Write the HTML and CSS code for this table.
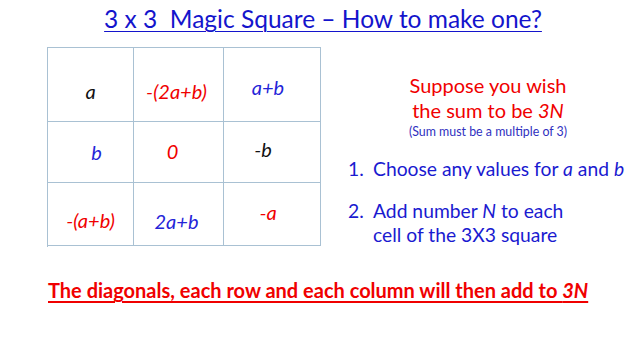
FILE: index.html
```html
<!DOCTYPE html>
<html>
<head>
<meta charset="utf-8">
<link rel="stylesheet" href="styles.css">
</head>
<body>
<div class="slide">
  <h1 class="title">3 x 3&nbsp; Magic Square – How to make one?</h1>
  <div class="middle">
    <div class="square">
      <div class="cell c1"><span class="k">a</span></div>
      <div class="cell c2"><span class="r">-(2a+b)</span></div>
      <div class="cell c3"><span class="bl">a+b</span></div>
      <div class="cell c4"><span class="bl">b</span></div>
      <div class="cell c5"><span class="r">0</span></div>
      <div class="cell c6"><span class="k">-b</span></div>
      <div class="cell c7"><span class="r">-(a+b)</span></div>
      <div class="cell c8"><span class="bl">2a+b</span></div>
      <div class="cell c9"><span class="r">-a</span></div>
    </div>
    <div class="notes">
      <div class="suppose">
        <p class="big">Suppose you wish</p>
        <p class="big">the sum to be <i>3N</i></p>
        <p class="small">(Sum must be a multiple of 3)</p>
      </div>
      <ol class="steps">
        <li class="step1"><span class="num">1.</span><span>Choose any values for <i>a</i> and <i>b</i></span></li>
        <li class="step2"><span class="num">2.</span><span>Add number <i>N</i> to each<br>cell of the 3X3 square</span></li>
      </ol>
    </div>
  </div>
  <p class="conclusion">The diagonals, each row and each column will then add to <i>3N</i></p>
</div>
</body>
</html>
```
FILE: styles.css
```css
* { box-sizing: border-box; }
html, body { margin: 0; padding: 0; background: #fff; }
body { width: 640px; height: 360px; overflow: hidden; font-family: Lato, "Open Sans", sans-serif; }
.slide { width: 640px; height: 360px; display: flex; flex-direction: column; }
p { margin: 0; }
.title {
  margin: 5px 0 0 0;
  font-weight: 400;
  font-size: 24.5px;
  line-height: 28px;
  color: #1414cc;
  text-align: center;
  padding-left: 6px;
  text-decoration: underline;
  text-decoration-thickness: 1px;
  text-underline-offset: 3px;
}
.middle { display: flex; margin-top: 14px; }
.square {
  margin-left: 47px;
  display: grid;
  grid-template-columns: 86px 90px 97px;
  grid-template-rows: 74px 61px 63px;
  border-top: 1px solid #a9c1d3;
  border-left: 1px solid #a9c1d3;
}
.cell {
  border-right: 1px solid #a9c1d3;
  border-bottom: 1px solid #a9c1d3;
  display: flex;
  align-items: center;
  justify-content: center;
  font-style: italic;
  font-size: 20px;
}
.k { color: #111; }
.r { color: #f00000; }
.bl { color: #2424d8; }
.c1 { padding-top: 12px; }
.c2 { padding: 12px 4px 0 0; }
.c3 { padding: 4px 8px 0 0; }
.c4 { padding-left: 12px; }
.c5 { padding: 0 12px 2px 0; }
.c6 { padding: 0 18px 6px 0; }
.c7 { padding-top: 12px; }
.c8 { padding: 14px 4px 0 0; }
.c9 { padding: 0 8px 4px 0; }
.notes { flex: 1; display: flex; flex-direction: column; padding-top: 26px; }
.suppose { text-align: center; padding-left: 15px; color: #f00000; }
.big { font-size: 20px; line-height: 25px; }
.small { font-size: 12.4px; line-height: 18px; color: #3030c0; }
.steps { list-style: none; margin: 16px 0 0 0; padding: 0 0 0 27px; color: #1a1ad0; font-size: 19.3px; line-height: 24px; }
.steps li { display: flex; }
.steps .num { width: 25px; }
.step2 { margin-top: 18px; }
.conclusion {
  margin: 31px 0 0 48px;
  color: #f00000;
  font-weight: 700;
  font-size: 20px;
  line-height: 24px;
  text-decoration: underline;
  text-decoration-thickness: 2px;
  text-underline-offset: 3px;
}
```
